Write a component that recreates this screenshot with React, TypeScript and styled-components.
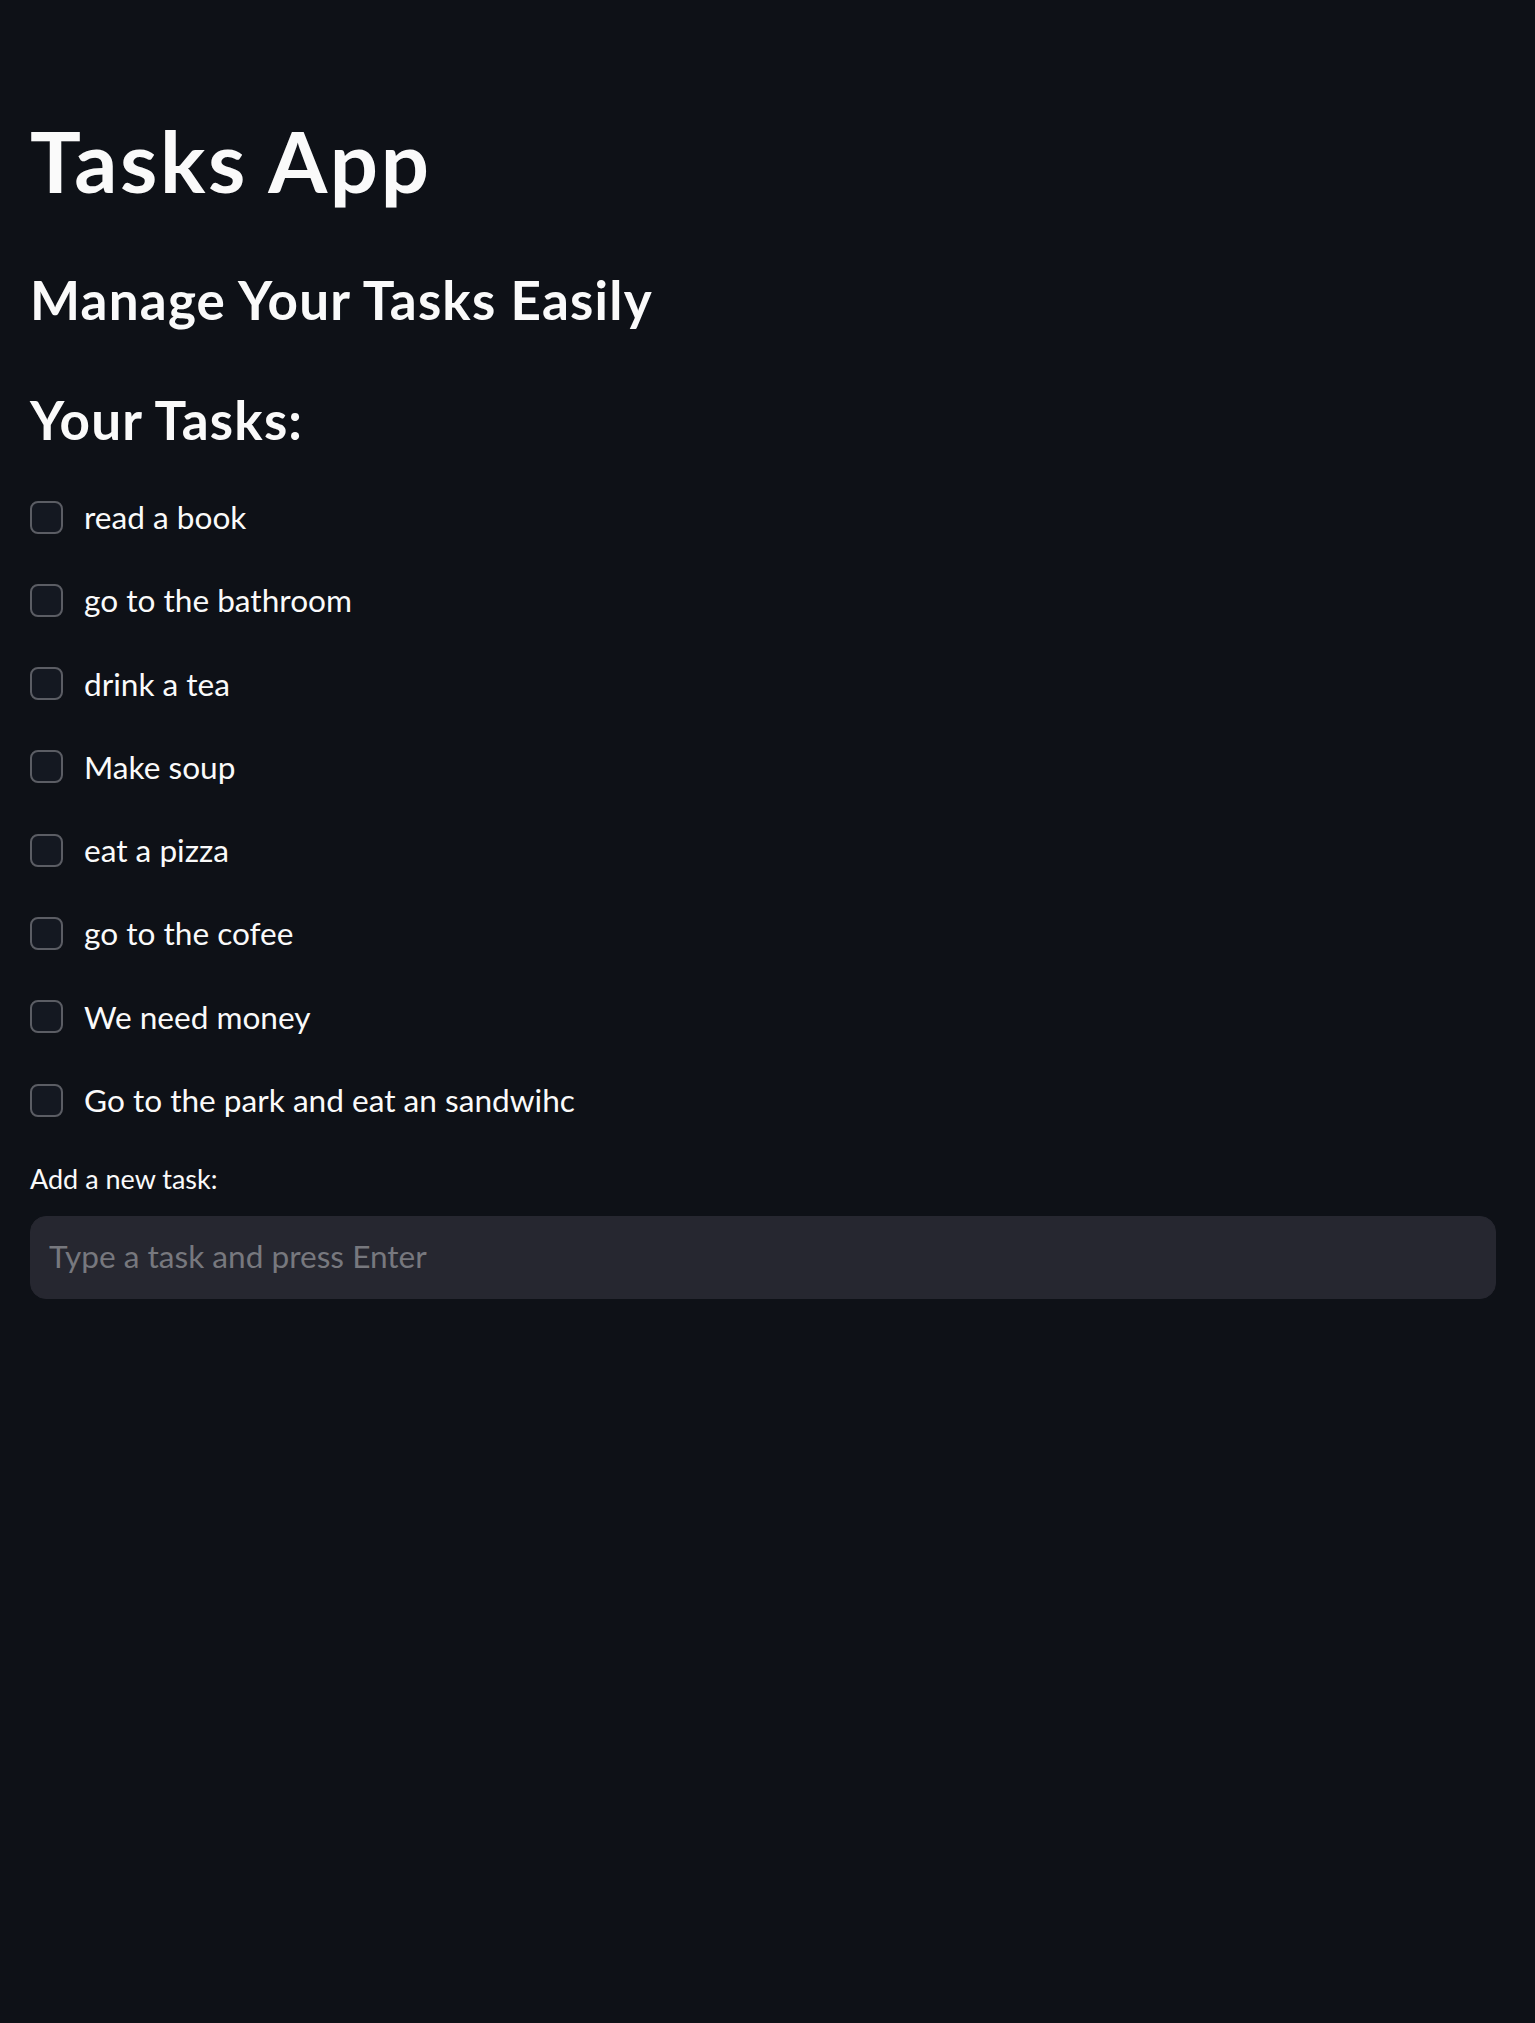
import React from "react";
import styled, { createGlobalStyle } from "styled-components";

const GlobalStyle = createGlobalStyle`
  html, body {
    margin: 0;
    padding: 0;
    background: #0e1117;
  }
  body {
    font-family: Lato, "Noto Sans", "Liberation Sans", sans-serif;
    color: #fafafa;
    min-height: 2023px;
  }
`;

const Page = styled.main`
  display: flex;
  flex-direction: column;
  padding: 109px 39px 0 30px;
  min-height: 2023px;
  box-sizing: border-box;
  background: #0e1117;
`;

const Title = styled.h1`
  margin: 0 0 57px 0;
  font-size: 85px;
  font-weight: 700;
  line-height: 102px;
  letter-spacing: 2.6px;
`;

const SubHeading = styled.h3<{ $gap: number }>`
  margin: 0 0 ${(p) => p.$gap}px 0;
  font-size: 53px;
  font-weight: 700;
  line-height: 64px;
  letter-spacing: 1.2px;
`;

const TaskList = styled.ul`
  list-style: none;
  margin: 0 0 38px 0;
  padding: 0;
  display: flex;
  flex-direction: column;
  gap: 33.3px;
`;

const TaskRow = styled.li`
  display: flex;
  align-items: center;
  height: 50px;
  gap: 21px;
  font-size: 31.6px;
  line-height: 38px;
`;

const Box = styled.span`
  width: 33px;
  height: 33px;
  box-sizing: border-box;
  border: 2px solid #5b5d64;
  border-radius: 8px;
  background: #141821;
  flex-shrink: 0;
`;

const Label = styled.label`
  display: block;
  font-size: 27px;
  line-height: 32px;
  margin: 0 0 21px 0;
`;

const Input = styled.input`
  display: block;
  width: 100%;
  height: 83px;
  box-sizing: border-box;
  border: 1px solid #262730;
  border-radius: 16px;
  background: #262730;
  color: #fafafa;
  font-family: Lato, "Noto Sans", "Liberation Sans", sans-serif;
  font-size: 31.6px;
  padding: 0 18px 4px 18px;
  outline: none;
  &::placeholder {
    color: #77787e;
  }
`;

const tasks = [
  "read a book",
  "go to the bathroom",
  "drink a tea",
  "Make soup",
  "eat a pizza",
  "go to the cofee",
  "We need money",
  "Go to the park and eat an sandwihc",
];

export default function App() {
  return (
    <>
      <GlobalStyle />
      <Page>
        <Title>Tasks App</Title>
        <SubHeading $gap={56}>Manage Your Tasks Easily</SubHeading>
        <SubHeading $gap={40}>Your Tasks:</SubHeading>
        <TaskList>
          {tasks.map((t) => (
            <TaskRow key={t}>
              <Box />
              <span>{t}</span>
            </TaskRow>
          ))}
        </TaskList>
        <Label htmlFor="new-task">Add a new task:</Label>
        <Input id="new-task" placeholder="Type a task and press Enter" />
      </Page>
    </>
  );
}
